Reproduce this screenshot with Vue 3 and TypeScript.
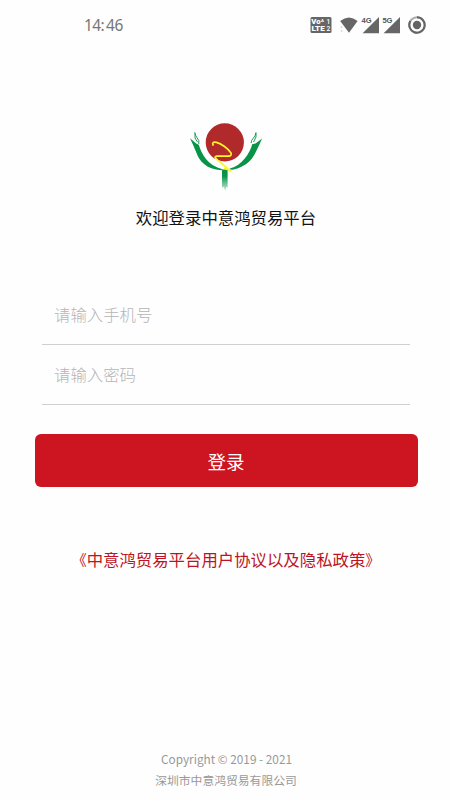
<script setup lang="ts">
import { ref } from 'vue'

const phone = ref('')
const password = ref('')
</script>

<template>
  <main class="screen">
    <header class="status">
      <span class="clock">14<span class="colon">:</span>46</span>
      <svg class="volte" width="22" height="16" viewBox="0 0 22 16">
        <rect x=".5" width="21" height="16" rx="1.5" fill="#666" />
        <g fill="#fff" font-family="Roboto, sans-serif" font-weight="900" font-size="6.6">
          <text x="1.3" y="6.6" textLength="9.2" lengthAdjust="spacingAndGlyphs">Vo</text>
          <text x="11" y="4.8" font-size="4.2">A</text>
          <text x="16.4" y="6.6" font-weight="500">1</text>
          <text x="1.5" y="14.4" textLength="13.3" lengthAdjust="spacingAndGlyphs">LTE</text>
          <text x="16.4" y="14.4" font-weight="500">2</text>
        </g>
      </svg>
      <svg class="wifi" width="20" height="16" viewBox="0 0 20 16">
        <path d="M1.2 4Q10-3.2 18.6 4L10 15.8Z" fill="#666" />
        <path d="M1.8 10h1.5M1.8 14h1.5" stroke="#bbb" />
      </svg>
      <svg class="signal" width="18" height="18" viewBox="0 0 18 18">
        <path d="M18 1v16.3H1.6Z" fill="#666" />
        <text x="0.6" y="7" class="network">4G</text>
      </svg>
      <svg class="signal" width="18" height="18" viewBox="0 0 18 18">
        <path d="M18 1v16.3H1.6Z" fill="#666" />
        <text x="0.4" y="7" class="network">5G</text>
      </svg>
      <svg class="ring" width="18" height="18" viewBox="0 0 18 18">
        <circle cx="9" cy="9" r="7.7" fill="none" stroke="#aaa" stroke-width="2" />
        <path d="M9 1.3A7.7 7.7 0 1 1 2.4 5" fill="none" stroke="#646464" stroke-width="2" />
        <circle cx="9" cy="9" r="4.2" fill="#646464" />
      </svg>
    </header>

    <svg class="logo" width="76" height="72" viewBox="0 0 76 72">
      <defs>
        <linearGradient id="stem" x1="0" y1="0" x2="0" y2="1">
          <stop offset=".3" stop-color="#079447" />
          <stop offset="1" stop-color="#079447" stop-opacity=".15" />
        </linearGradient>
      </defs>
      <circle cx="36.8" cy="22.4" r="19.1" fill="#b0292b" />
      <g fill="#079447">
        <path d="M2 18.2L8.5 23.7L10.8 24.8C13.5 34 20 46 34.5 49.2L33.5 50.2C18 49.5 11 40.5 8.3 32.5C6 26.5 4 22.5 2 18.2Z" />
        <path d="M74.2 18.4L67.5 23.4L64.2 24.3C62 33 54 45.5 42 48.5L40.5 50.2C55 49 63.5 41 67.3 33C70.5 26.5 72.2 22.5 74.2 18.4Z" />
      </g>
      <g fill="none" stroke="#079447" stroke-width=".9">
        <path d="M6.7 12.2L7.7 15.7L10.8 20.5V24M7 13.5V18L9.5 22" />
        <path d="M68 12.3L67 16L63.7 20.3L63.2 23M68 13V17L65.5 22" />
      </g>
      <path d="M34 49.5h5.6V68l-1.3-1.3-1.2 4.6-1.2-4.6-1.9 1Z" fill="url(#stem)" />
      <path d="M25.1 25C23.8 22.4 25.7 21.6 28.5 22.4C33 23.6 40.5 28.5 43.1 33.2C43.8 35.8 42 36.2 39 36.2L28.6 36.1C25.5 36.7 28 38.7 30 40.5Q35 44 42.4 51.4M36.8 48.4Q40 49.5 43 50.4" fill="none" stroke="#fff529" stroke-width="1.7" stroke-linecap="round" stroke-linejoin="round" />
    </svg>
    <h1>欢迎登录中意鸿贸易平台</h1>

    <form class="login" @submit.prevent>
      <input v-model="phone" class="field" type="tel" placeholder="请输入手机号" />
      <input v-model="password" class="field" type="password" placeholder="请输入密码" />
      <button type="submit">登录</button>
    </form>

    <a class="agreement"><span class="bracket">《</span>中意鸿贸易平台用户协议以及隐私政策<span class="bracket">》</span></a>

    <footer>
      <p class="copyright">Copyright © 2019 - 2021</p>
      <p>深圳市中意鸿贸易有限公司</p>
    </footer>
  </main>
</template>

<style>
body {
  background: #fff;
}
</style>

<style scoped>
.screen {
  box-sizing: border-box;
  width: 450px;
  height: 800px;
  overflow: hidden;
  display: flex;
  flex-direction: column;
  align-items: center;
  padding-left: 2px;
  background: #fefefe;
  font-family: "Noto Sans CJK SC", sans-serif;
}

.status {
  box-sizing: border-box;
  align-self: stretch;
  flex: none;
  height: 50px;
  display: flex;
  align-items: center;
  padding: 0 24px 0 82px;
}

.clock {
  margin-right: auto;
  font: 15.5px/20px "Noto Sans", sans-serif;
  color: #777;
  letter-spacing: -0.6px;
}

.colon {
  margin-right: 2px;
}

.wifi {
  margin-left: 7px;
}

.signal {
  margin-left: 3px;
  overflow: visible;
}

.wifi + .signal {
  margin-left: 2px;
}

.network {
  font: 700 7.6px "Liberation Sans", sans-serif;
  fill: #555;
  stroke: #fefefe;
  stroke-width: 1.2px;
  paint-order: stroke;
}

.ring {
  margin-left: 8px;
}

.logo {
  flex: none;
  margin-top: 70px;
}

h1 {
  margin: 13px 0 0;
  font-size: 16.4px;
  line-height: 24px;
  font-weight: 400;
  color: #111;
}

.login {
  width: 384px;
  margin-top: 56px;
  display: flex;
  flex-direction: column;
  align-items: center;
}

.field {
  box-sizing: border-box;
  width: 368px;
  height: 60px;
  padding: 0 12px 2px;
  border: 0;
  border-bottom: 1px solid #cfcfcf;
  border-radius: 0;
  outline: none;
  background: transparent;
  font: 300 16.4px/24px "Noto Sans CJK SC", sans-serif;
}

.field::placeholder {
  color: #b5b5b5;
  opacity: 1;
}

button {
  width: 383px;
  height: 53px;
  margin-top: 29px;
  padding: 0;
  border: 0;
  border-radius: 6px;
  background: #cd1421;
  color: #fff;
  font: 400 18.5px/28px "Noto Sans CJK SC", sans-serif;
}

.agreement {
  margin-top: 60px;
  font-size: 16.4px;
  line-height: 24px;
  color: #bd1425;
}

.bracket {
  font-size: 15px;
}

footer {
  margin-top: auto;
  padding-bottom: 10px;
  font-size: 11.8px;
  line-height: 21px;
  color: #999;
  text-align: center;
}

footer p {
  margin: 0;
}

.copyright {
  padding-left: 1px;
}
</style>
